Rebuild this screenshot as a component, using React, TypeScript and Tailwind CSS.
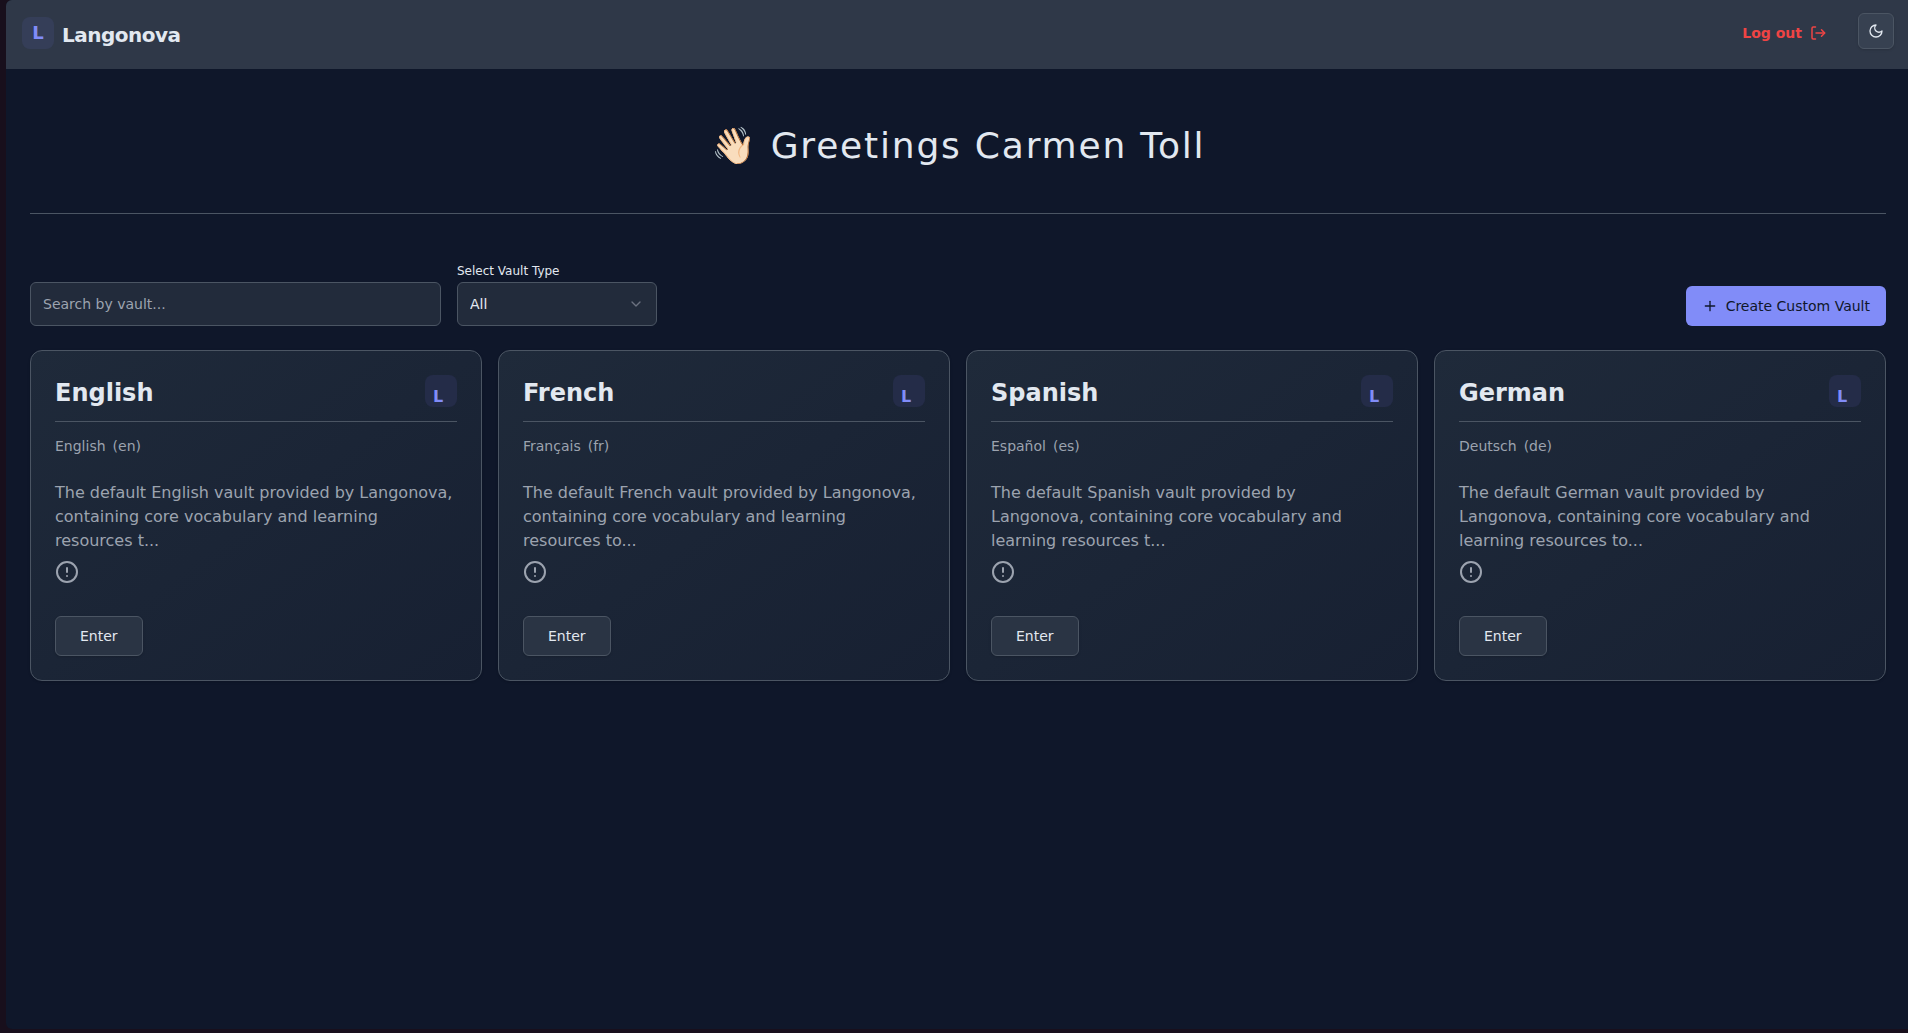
import React, { useState } from 'react';
import { ChevronDown, CircleAlert, Plus } from 'lucide-react';

type Vault = {
  name: string;
  nativeName: string;
  code: string;
  description: string;
};

const vaults: Vault[] = [
  {
    name: 'English',
    nativeName: 'English',
    code: 'en',
    description:
      'The default English vault provided by Langonova, containing core vocabulary and learning resources t...',
  },
  {
    name: 'French',
    nativeName: 'Français',
    code: 'fr',
    description:
      'The default French vault provided by Langonova, containing core vocabulary and learning resources to...',
  },
  {
    name: 'Spanish',
    nativeName: 'Español',
    code: 'es',
    description:
      'The default Spanish vault provided by Langonova, containing core vocabulary and learning resources t...',
  },
  {
    name: 'German',
    nativeName: 'Deutsch',
    code: 'de',
    description:
      'The default German vault provided by Langonova, containing core vocabulary and learning resources to...',
  },
];

const LogoutIcon = () => (
  <svg
    className="size-4"
    viewBox="0 0 16 16"
    fill="none"
    stroke="currentColor"
    strokeWidth="1.5"
    strokeLinecap="round"
    strokeLinejoin="round"
    aria-hidden="true"
  >
    <path d="M5.5 14H3.2A1.2 1.2 0 0 1 2 12.8V3.2A1.2 1.2 0 0 1 3.2 2h2.3" />
    <path d="M6 8h8.5" />
    <path d="m11.5 4.8 3.2 3.2-3.2 3.2" />
  </svg>
);

const MoonIcon = () => (
  <svg
    className="size-4"
    viewBox="0 0 24 24"
    fill="none"
    stroke="currentColor"
    strokeWidth="2"
    strokeLinecap="round"
    strokeLinejoin="round"
    aria-hidden="true"
  >
    <path d="M12 3a6 6 0 0 0 9 9 9 9 0 1 1-9-9Z" />
  </svg>
);

const Header = () => (
  <header className="flex h-[69px] items-start justify-between bg-[#2f3848] pr-3.5 pl-4">
    <a href="#" className="flex items-center gap-2 pt-[17px]">
      <span className="flex size-8 items-center justify-center rounded-lg bg-[#353e58] text-lg font-bold text-[#818cf8]">
        L
      </span>
      <span className="pt-1 text-xl leading-7 font-semibold tracking-tight">Langonova</span>
    </a>
    <div className="flex items-start gap-8 pt-[13px]">
      <button type="button" className="flex h-10 items-center gap-2 text-sm font-semibold text-[#ef4444]">
        Log out
        <LogoutIcon />
      </button>
      <button
        type="button"
        aria-label="Toggle theme"
        className="flex size-9 items-center justify-center rounded-md border border-[#4b5563] bg-[#374151] shadow-sm"
      >
        <MoonIcon />
      </button>
    </div>
  </header>
);

const VaultCard = ({ vault }: { vault: Vault }) => (
  <article className="flex flex-col items-start rounded-xl border border-[#4b5563] bg-linear-to-br from-[#1f2a3a] to-[#172032] p-6 shadow-sm">
    <div className="flex w-full items-start justify-between border-b border-[#4b5563] pb-3">
      <h2 className="pt-0.5 text-2xl leading-8 font-bold">{vault.name}</h2>
      <span className="size-8 rounded-lg bg-[#242c48] px-2 pt-2 leading-7 font-bold text-[#818cf8]">L</span>
    </div>
    <p className="mt-3.5 flex gap-[7px] text-sm text-[#9ca3af]">
      <span>{vault.nativeName}</span>
      <span>({vault.code})</span>
    </p>
    <p className="mt-[25px] text-base text-[#9ca3af]">{vault.description}</p>
    <CircleAlert className="mt-[7px] size-6 text-[#9ca3af]" />
    <button
      type="button"
      className="mt-8 h-10 rounded-md border border-[#4b5563] bg-[#2a3444] px-6 text-sm shadow-sm"
    >
      Enter
    </button>
  </article>
);

const App = () => {
  const [search, setSearch] = useState('');
  const [type, setType] = useState('all');

  const visible = vaults.filter((v) => v.name.toLowerCase().includes(search.toLowerCase()));

  return (
    <div className="flex min-h-screen flex-col bg-[#180f1c] pb-1 pl-1.5 font-['DejaVu_Sans',sans-serif] text-[#e2e8f0]">
      <div className="flex-1 overflow-hidden rounded-l-md bg-[#0f172a]">
        <Header />
        <main className="pr-[22px] pl-6">
          <div className="flex h-[145px] items-center justify-center border-b border-[#4b5563] pt-2.5">
            <h1 className="text-4xl tracking-wider">👋🏻 Greetings Carmen Toll</h1>
          </div>

          <div className="mt-12 flex items-end justify-between">
            <div className="flex items-end gap-4">
              <input
                type="text"
                aria-label="Search by vault"
                placeholder="Search by vault..."
                value={search}
                onChange={(e) => setSearch(e.target.value)}
                className="h-11 w-[411px] rounded-md border border-[#4b5563] bg-[#222b3b] px-3 text-sm placeholder:text-[#9ca3af]"
              />
              <div className="flex w-[200px] flex-col">
                <label htmlFor="vault-type" className="pt-px pb-[3px] text-xs">
                  Select Vault Type
                </label>
                <div className="relative">
                  <select
                    id="vault-type"
                    value={type}
                    onChange={(e) => setType(e.target.value)}
                    className="h-11 w-full appearance-none rounded-md border border-[#4b5563] bg-[#222b3b] px-3 text-sm"
                  >
                    <option value="all">All</option>
                    <option value="default">Default</option>
                    <option value="custom">Custom</option>
                  </select>
                  <ChevronDown className="pointer-events-none absolute top-3.5 right-[13px] size-4 text-[#6b7280]" />
                </div>
              </div>
            </div>
            <button
              type="button"
              className="flex h-10 items-center gap-2 rounded-md bg-[#818cf8] px-4 text-sm text-[#0f172a]"
            >
              <Plus className="size-4" strokeWidth={2} />
              Create Custom Vault
            </button>
          </div>

          <section className="mt-6 grid grid-cols-4 gap-4">
            {visible.map((vault) => (
              <VaultCard key={vault.code} vault={vault} />
            ))}
          </section>
        </main>
      </div>
    </div>
  );
};

export default App;
